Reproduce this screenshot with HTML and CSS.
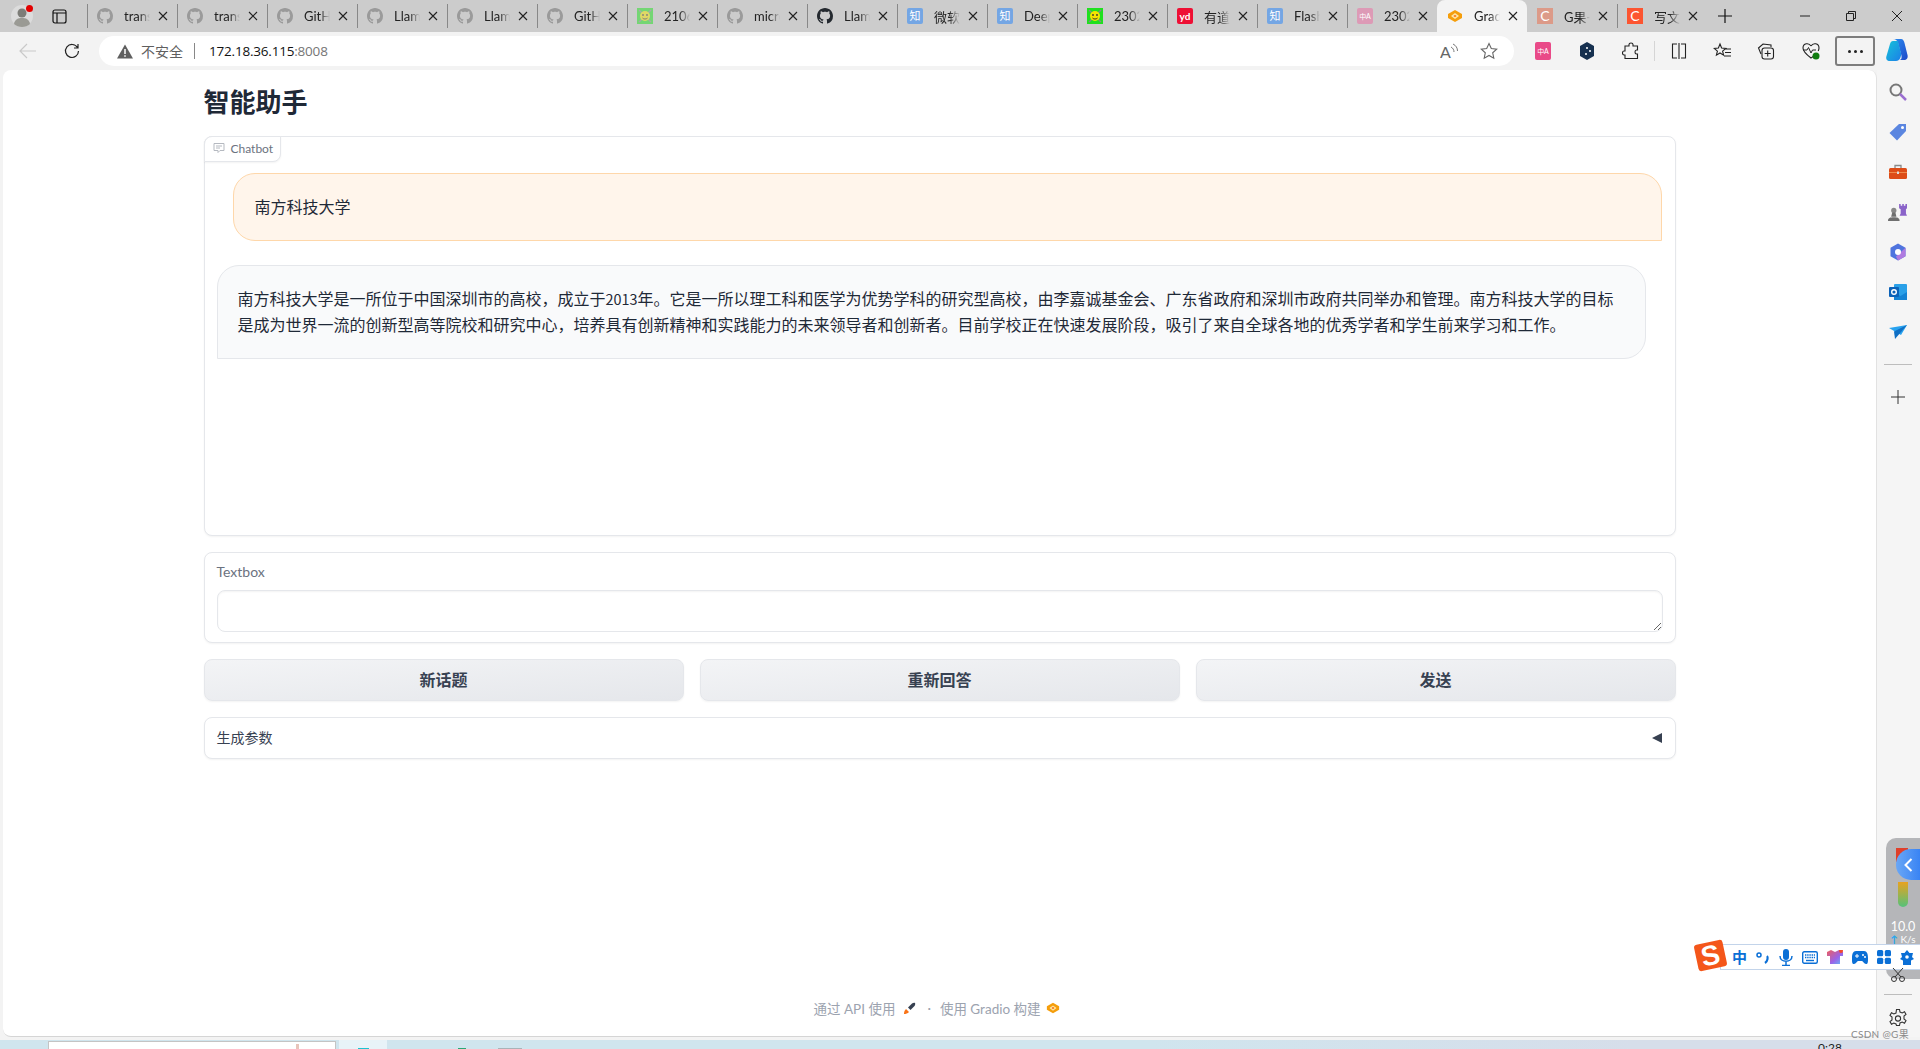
FILE: index.html
```html
<!DOCTYPE html>
<html lang="zh-CN">
  <head>
    <meta charset="UTF-8" />
    <meta name="viewport" content="width=device-width, initial-scale=1.0" />
    <title>智能助手</title>
    <link rel="stylesheet" href="styles.css">
  </head>
  <body>
    <svg class="defs" width="0" height="0">
      <symbol id="gh" viewBox="0 0 16 16">
        <path d="M8 0C3.58 0 0 3.58 0 8c0 3.54 2.29 6.53 5.47 7.59.4.07.55-.17.55-.38 0-.19-.01-.82-.01-1.49-2.01.37-2.53-.49-2.69-.94-.09-.23-.48-.94-.82-1.13-.28-.15-.68-.52-.01-.53.63-.01 1.08.58 1.23.82.72 1.21 1.87.87 2.33.66.07-.52.28-.87.51-1.07-1.78-.2-3.64-.89-3.64-3.95 0-.87.31-1.59.82-2.15-.08-.2-.36-1.02.08-2.12 0 0 .67-.21 2.2.82.64-.18 1.32-.27 2-.27.68 0 1.36.09 2 .27 1.53-1.04 2.2-.82 2.2-.82.44 1.1.16 1.92.08 2.12.51.56.82 1.27.82 2.15 0 3.07-1.87 3.75-3.65 3.95.29.25.54.73.54 1.48 0 1.07-.01 1.93-.01 2.2 0 .21.15.46.55.38A8.013 8.013 0 0016 8c0-4.42-3.58-8-8-8z" fill="currentColor" />
      </symbol>
      <symbol id="close" viewBox="0 0 10 10">
        <path d="M1 1l8 8M9 1l-8 8" stroke="#222" stroke-width="1.1" fill="none" />
      </symbol>
      <symbol id="smile" viewBox="0 0 16 16">
        <rect width="16" height="16" fill="#1fe01f" />
        <path d="M2 2l12 12M14 2L2 14" stroke="#888" stroke-width="1.4" />
        <circle cx="8" cy="8" r="5" fill="#f5e400" />
        <circle cx="6" cy="7" r=".9" fill="#333" />
        <circle cx="10" cy="7" r=".9" fill="#333" />
        <path d="M5.5 10c1.5 1.4 3.5 1.4 5 0" stroke="#333" fill="none" />
      </symbol>
      <symbol id="gradio" viewBox="0 0 16 16">
        <path d="M8 2l7 4v4l-7 4-7-4V6z" fill="#f59e0b" />
        <path d="M8 5l4 3-4 3-4-3z" fill="#fde9a8" />
        <path d="M8 6.700l1.700 1.300L8 9.300 6.300 8z" fill="#f97316" />
      </symbol>
    </svg>

    <div class="tabbar">
      <div class="profile">
        <svg width="24" height="24" viewBox="0 0 24 24">
          <circle cx="12" cy="12" r="11" fill="#dcdcdc" />
          <circle cx="12" cy="9" r="4.500" fill="#7d7d78" />
          <path d="M4 20c1-5 4-6 8-6s7 1 8 6c-4 4-12 4-16 0z" fill="#9a9a94" />
        </svg>
        <span class="profile-dot"></span>
      </div>
      <div class="tablist-btn">
        <svg width="15" height="15" viewBox="0 0 15 15">
          <rect x="1" y="1" width="13" height="13" rx="2" fill="none" stroke="#111" stroke-width="1.2" />
          <path d="M1 4h13M5 4v10" stroke="#111" stroke-width="1.2" />
        </svg>
      </div>
      <div class="tabs">
        <div class="tab"><svg class="fav faded"><use href="#gh" /></svg><span class="tab-title">trans</span><svg class="tab-x"><use href="#close" /></svg></div>
        <div class="tab"><svg class="fav faded"><use href="#gh" /></svg><span class="tab-title">trans</span><svg class="tab-x"><use href="#close" /></svg></div>
        <div class="tab"><svg class="fav faded"><use href="#gh" /></svg><span class="tab-title">GitHub</span><svg class="tab-x"><use href="#close" /></svg></div>
        <div class="tab"><svg class="fav faded"><use href="#gh" /></svg><span class="tab-title">Llama</span><svg class="tab-x"><use href="#close" /></svg></div>
        <div class="tab"><svg class="fav faded"><use href="#gh" /></svg><span class="tab-title">Llama</span><svg class="tab-x"><use href="#close" /></svg></div>
        <div class="tab"><svg class="fav faded"><use href="#gh" /></svg><span class="tab-title">GitHub</span><svg class="tab-x"><use href="#close" /></svg></div>
        <div class="tab"><svg class="fav dim"><use href="#smile" /></svg><span class="tab-title">2106</span><svg class="tab-x"><use href="#close" /></svg></div>
        <div class="tab"><svg class="fav faded"><use href="#gh" /></svg><span class="tab-title">micro</span><svg class="tab-x"><use href="#close" /></svg></div>
        <div class="tab"><svg class="fav dark"><use href="#gh" /></svg><span class="tab-title">Llama</span><svg class="tab-x"><use href="#close" /></svg></div>
        <div class="tab"><span class="fav badge zhi">知</span><span class="tab-title">微软亚</span><svg class="tab-x"><use href="#close" /></svg></div>
        <div class="tab"><span class="fav badge zhi">知</span><span class="tab-title">Deep</span><svg class="tab-x"><use href="#close" /></svg></div>
        <div class="tab"><svg class="fav"><use href="#smile" /></svg><span class="tab-title">2302</span><svg class="tab-x"><use href="#close" /></svg></div>
        <div class="tab"><span class="fav badge yd">yd</span><span class="tab-title">有道翻</span><svg class="tab-x"><use href="#close" /></svg></div>
        <div class="tab"><span class="fav badge zhi">知</span><span class="tab-title">Flash</span><svg class="tab-x"><use href="#close" /></svg></div>
        <div class="tab"><span class="fav badge trans">中A</span><span class="tab-title">2302</span><svg class="tab-x"><use href="#close" /></svg></div>
        <div class="tab tab-active"><svg class="fav"><use href="#gradio" /></svg><span class="tab-title">Gradio</span><svg class="tab-x"><use href="#close" /></svg></div>
        <div class="tab tab-after"><span class="fav badge csdn faded-badge">C</span><span class="tab-title">G果-</span><svg class="tab-x"><use href="#close" /></svg></div>
        <div class="tab"><span class="fav badge csdn">C</span><span class="tab-title">写文章</span><svg class="tab-x"><use href="#close" /></svg></div>
        <div class="tab-end"></div>
      </div>
      <div class="newtab">
        <svg width="14" height="14" viewBox="0 0 14 14"><path d="M7 0v14M0 7h14" stroke="#111" stroke-width="1.200" /></svg>
      </div>
      <div class="winbtns">
        <svg class="win-min" width="10" height="10" viewBox="0 0 10 10"><path d="M0 5h10" stroke="#222" /></svg>
        <svg class="win-max" width="10" height="10" viewBox="0 0 10 10"><path d="M.5 2.500h7v7h-7zM2.500 2.500v-2h7v7h-2" fill="none" stroke="#222" /></svg>
        <svg class="win-close" width="10" height="10" viewBox="0 0 10 10"><path d="M0 0l10 10M10 0L0 10" stroke="#222" /></svg>
      </div>
    </div>

    <div class="toolbar">
      <svg class="nav-back" width="18" height="16" viewBox="0 0 18 16"><path d="M17 8H1M8 1L1 8l7 7" fill="none" stroke="#c9c9c9" stroke-width="1.200" /></svg>
      <svg class="nav-reload" width="16" height="16" viewBox="0 0 16 16"><path d="M13.500 4.500A6.500 6.500 0 1 0 14.500 8M14 1v4h-4" fill="none" stroke="#222" stroke-width="1.200" /></svg>
      <div class="addressbar">
        <svg class="warn" width="16" height="15" viewBox="0 0 16 15"><path d="M8 .5l8 14H0z" fill="#5f5f5f" /><path d="M8 5v5M8 11.200v1.600" stroke="#fff" stroke-width="1.500" /></svg>
        <span class="insecure">不安全</span>
        <span class="addr-sep"></span>
        <span class="url">172.18.36.115<span class="url-port">:8008</span></span>
        <svg class="addr-read" width="18" height="18" viewBox="0 0 18 18"><text x="0" y="16" class="read-a">A</text><path d="M11 5c2 1 3 3 3 5M13 2c3 1.500 4.500 4 4.500 7" fill="none" stroke="#777" /></svg>
        <svg class="addr-star" width="18" height="18" viewBox="0 0 18 18"><path d="M9 1.500l2.300 5 5.400.6-4 3.700 1.100 5.400L9 13.500l-4.800 2.700 1.100-5.400-4-3.700 5.400-.6z" fill="none" stroke="#666" stroke-width="1.100" /></svg>
      </div>
      <div class="ext-icons">
        <span class="ext ext-trans">中A</span>
        <svg class="ext" width="18" height="20" viewBox="0 0 18 20"><path d="M9 1l7 4v10l-7 4-7-4V5z" fill="#16304f" /><circle cx="9" cy="7" r="1" fill="#fff" /><circle cx="12" cy="10" r="1" fill="#fff" /><circle cx="8" cy="13" r="1" fill="#fff" /></svg>
        <svg class="ext" width="18" height="18" viewBox="0 0 18 18"><path d="M7 2.500c0-2 4-2 4 0V4h4.500v4h-1c-2 0-2 4 0 4h1v4.500H3V13H2c-2 0-2-4 0-4h1V4h4z" fill="none" stroke="#222" stroke-width="1.100" /></svg>
        <span class="ext-sep"></span>
        <svg class="ext" width="16" height="16" viewBox="0 0 16 16"><path d="M6 1H1.500v14H6M10 1h4.500v14H10M8 0v16" fill="none" stroke="#222" stroke-width="1.100" /></svg>
        <svg class="ext" width="18" height="18" viewBox="0 0 18 18"><path d="M7 2l1.600 4 4.200.4-3.200 2.700 1 4.100L7 11l-3.600 2.200 1-4.100L1.200 6.400 5.400 6zM12 7h6M12 10.500h6M11 14h7" fill="none" stroke="#222" stroke-width="1.100" /></svg>
        <svg class="ext" width="18" height="18" viewBox="0 0 18 18"><path d="M4 12L1.500 6 6 2l8 1v2" fill="none" stroke="#222" stroke-width="1.100" /><rect x="5" y="6" width="11.500" height="11" rx="2.500" fill="none" stroke="#222" stroke-width="1.100" /><path d="M10.700 8.500v6M7.700 11.500h6" stroke="#222" stroke-width="1.100" /></svg>
        <svg class="ext" width="20" height="20" viewBox="0 0 20 20"><path d="M10 5C8 1.500 2 2 2 7c0 3.500 4 7 8 10 1-.7 1.500-1 2-1.500M10 5c2-3.500 8-3 8 2 0 1-.3 2-.8 3" fill="none" stroke="#222" stroke-width="1.100" /><path d="M2 9h4l1.500-2.500L10 12l1.500-3H15" fill="none" stroke="#222" /><circle cx="15" cy="15" r="3.500" fill="#107c10" /></svg>
        <div class="more"><span></span><span></span><span></span></div>
      </div>
      <svg class="copilot" width="24" height="26" viewBox="0 0 24 26">
        <defs>
          <linearGradient id="cop1" x1="0" y1="0" x2="1" y2="1"><stop offset="0" stop-color="#17c3d8" /><stop offset="1" stop-color="#1b7fe8" /></linearGradient>
          <linearGradient id="cop2" x1="0" y1="0" x2="1" y2="1"><stop offset="0" stop-color="#2b8cf0" /><stop offset="1" stop-color="#1d48c8" /></linearGradient>
        </defs>
        <path d="M8 1h8c2 0 3 2 3.500 4l3 12c.8 3-1 5-3.500 5h-5c3 0 3-3 2-6L13 5c-.5-2-2-4-5-4z" fill="url(#cop2)" />
        <path d="M8 3h5l3 12c.6 3-1 8-5 8H5c-3 0-4.500-2-3.500-5L5 6c.5-2 1.500-3 3-3z" fill="url(#cop1)" />
      </svg>
    </div>

    <div class="window">
      <main class="page">
        <div class="container">
          <h1 class="app-title">智能助手</h1>

          <section class="block chatbot">
            <div class="block-label">
              <svg width="12" height="12" viewBox="0 0 12 12"><path d="M1 1.500h10v7H7l-2 2v-2H1z" fill="none" stroke="#b5b9c0" /><path d="M3 4h6M3 6h4" stroke="#b5b9c0" /></svg>
              Chatbot
            </div>
            <div class="messages">
              <div class="msg msg-user">南方科技大学</div>
              <div class="msg msg-bot">南方科技大学是一所位于中国深圳市的高校，成立于<span class="digits">2013</span>年。它是一所以理工科和医学为优势学科的研究型高校，由李嘉诚基金会、广东省政府和深圳市政府共同举办和管理。南方科技大学的目标是成为世界一流的创新型高等院校和研究中心，培养具有创新精神和实践能力的未来领导者和创新者。目前学校正在快速发展阶段，吸引了来自全球各地的优秀学者和学生前来学习和工作。</div>
            </div>
          </section>

          <section class="block textbox">
            <label class="field-label" for="msgInput">Textbox</label>
            <textarea id="msgInput" class="field-input" rows="1"></textarea>
          </section>

          <div class="btn-row">
            <button class="btn">新话题</button>
            <button class="btn">重新回答</button>
            <button class="btn">发送</button>
          </div>

          <section class="block accordion">
            <span>生成参数</span>
            <span class="caret"></span>
          </section>
        </div>

        <footer class="foot">
          <span>通过 API 使用</span>
          <svg class="foot-rocket" width="13" height="13" viewBox="0 0 13 13"><path d="M1 12c0-2 .5-3.500 2-5l3 3c-1.500 1.500-3 2-5 2z" fill="#f97316" /><path d="M5 5.500L9 1.500c1-.8 2.500-.8 3-.5.300.5.300 2-.5 3L7.500 8z" fill="#374151" /></svg>
          <span class="foot-dot">·</span>
          <span>使用 Gradio 构建</span>
          <svg class="foot-logo"><use href="#gradio" /></svg>
        </footer>
      </main>

      <aside class="sidebar">
        <div class="side-item">
          <svg width="20" height="20" viewBox="0 0 20 20"><circle cx="8" cy="8" r="5.500" fill="none" stroke="#777" stroke-width="2" /><path d="M12 12l6 6" stroke="#9b6fd0" stroke-width="2.500" /></svg>
        </div>
        <div class="side-item">
          <svg width="18" height="18" viewBox="0 0 18 18"><path d="M10 1h7v7l-9 9.500L.500 10z" fill="#5b86e0" /><circle cx="13.500" cy="4.500" r="1.500" fill="#fff" /></svg>
        </div>
        <div class="side-item">
          <svg width="18" height="16" viewBox="0 0 18 16"><path d="M6 4V1.500h6V4" fill="none" stroke="#8a8a8a" stroke-width="1.300" /><rect y="4" width="18" height="11" rx="1.500" fill="#dd4c17" /><path d="M0 8.500h18" stroke="#f08a4b" /><rect x="8" y="7.500" width="2" height="2.500" fill="#ddd" /></svg>
        </div>
        <div class="side-item">
          <svg width="19" height="19" viewBox="0 0 18 18"><path d="M10.500 1h1.500v1.500h1.500V1h1.500v1.500h1.500V1H18v4l-1 1v4l1 2h-7l1-2V6l-1.500-1z" fill="#8a63c9" /><circle cx="5.500" cy="7" r="2.500" fill="#888" /><path d="M4 9h3l1 4H3zM0 17c0-3 2-3.500 5.500-3.500S11 14 11 17z" fill="#6f6f6f" /></svg>
        </div>
        <div class="side-item">
          <svg width="18" height="18" viewBox="0 0 18 18"><path d="M9 .500l7.500 4.300v8.400L9 17.500l-7.500-4.300V4.800z" fill="#4f74de" /><path d="M16.500 4.800v8.400L9 17.500l-2-4z" fill="#b07be0" /><circle cx="9" cy="9" r="3" fill="#fff" /></svg>
        </div>
        <div class="side-item">
          <svg width="18" height="18" viewBox="0 0 18 18"><rect x="5" y="1" width="13" height="16" rx="1" fill="#2aa0e8" /><path d="M5 9l6.500 4L18 9v8H5z" fill="#1483d4" /><rect y="4" width="10" height="10" rx="1" fill="#0b62b8" /><circle cx="5" cy="9" r="2.300" fill="none" stroke="#fff" stroke-width="1.400" /></svg>
        </div>
        <div class="side-item">
          <svg width="18" height="16" viewBox="0 0 18 16"><path d="M0 4l18-3-6 10z" fill="#27a2ef" /><path d="M18 1L5 7.500 6 15l3-3.500z" fill="#0f6fc4" /></svg>
        </div>
        <div class="side-sep"></div>
        <div class="side-item">
          <svg width="14" height="14" viewBox="0 0 14 14"><path d="M7 0v14M0 7h14" stroke="#333" /></svg>
        </div>
        <div class="side-bottom">
          <div class="side-sep side-sep-low"></div>
          <svg width="20" height="20" viewBox="0 0 20 20"><path d="M8.500 1.500h3l.5 2.500 2.200 1 2.300-1.200 1.500 2.600-2 1.700v2.800l2 1.700-1.500 2.600-2.300-1.200-2.200 1-.5 2.500h-3L8 16l-2.200-1-2.300 1.200L2 13.600l2-1.700V9.100L2 7.400l1.500-2.600L5.800 6 8 5z" fill="none" stroke="#333" stroke-width="1.100" /><circle cx="10" cy="10.500" r="2.600" fill="none" stroke="#333" stroke-width="1.100" /></svg>
        </div>
      </aside>
    </div>

    <div class="taskbar">
      <div class="task-window"><span class="task-peak"></span></div>
      <div class="task-light"><span class="task-cyan"></span></div>
      <span class="task-green"></span>
      <span class="task-gray"></span>
      <span class="task-clock">0:28</span>
    </div>

    <!-- floating widgets that sit over the page -->
    <div class="speed-panel">
      <div class="speed-red"></div>
      <div class="speed-toggle">
        <svg width="9" height="14" viewBox="0 0 9 14"><path d="M7.500 1L1.500 7l6 6" fill="none" stroke="#fff" stroke-width="2" /></svg>
      </div>
      <div class="speed-bar"></div>
      <div class="speed-num">10.0</div>
      <div class="speed-unit"><b>↑</b> K/s</div>
    </div>

    <div class="ime">
      <span class="ime-logo">S</span>
      <span class="ime-item ime-zh">中</span>
      <svg class="ime-item" width="14" height="14" viewBox="0 0 14 14"><circle cx="3" cy="5" r="2" fill="none" stroke="#0a6fd6" stroke-width="1.500" /><path d="M11 6c1 1 1 5-2 7" fill="none" stroke="#0a6fd6" stroke-width="2.200" /></svg>
      <svg class="ime-item" width="14" height="17" viewBox="0 0 14 17"><rect x="4" width="6" height="11" rx="3" fill="#0a6fd6" /><path d="M1 7c0 7 12 7 12 0M7 12v4M3 16.500h8" fill="none" stroke="#0a6fd6" stroke-width="1.500" /></svg>
      <svg class="ime-item" width="16" height="13" viewBox="0 0 16 13"><rect x=".7" y=".7" width="14.600" height="11.600" rx="1.500" fill="none" stroke="#0a6fd6" stroke-width="1.400" /><path d="M3 4h10M3 6.500h10" stroke="#0a6fd6" stroke-width="1.400" stroke-dasharray="1.400 .8" /><path d="M4 9.500h8" stroke="#0a6fd6" stroke-width="1.400" /></svg>
      <svg class="ime-item" width="16" height="14" viewBox="0 0 16 14"><defs><linearGradient id="shirt" x1="0" y1="0" x2="1" y2="1"><stop offset="0" stop-color="#ef5d5d" /><stop offset=".6" stop-color="#9a63e8" /><stop offset="1" stop-color="#5cc2f5" /></linearGradient></defs><path d="M0 2l4-2 4 2 4-2 4 2v4h-3v8H3V6H0z" fill="url(#shirt)" /><circle cx="14" cy="1" r="2" fill="#f4492d" /></svg>
      <svg class="ime-item" width="16" height="13" viewBox="0 0 16 13"><path d="M4 0h8c3 0 4 3 4 7s0 6-2 6-3-3-4-3H6c-1 0-2 3-4 3s-2-2-2-6 1-7 4-7z" fill="#0a6fd6" /><path d="M3 5h4M5 3v4" stroke="#fff" /><circle cx="11" cy="4" r="1" fill="#fff" /><circle cx="13" cy="6" r="1" fill="#fff" /></svg>
      <svg class="ime-item" width="14" height="14" viewBox="0 0 14 14"><rect width="6.200" height="6.200" rx="1.500" fill="#0a6fd6" /><rect x="7.800" width="6.200" height="6.200" rx="1.500" fill="#0a6fd6" /><rect y="7.800" width="6.200" height="6.200" rx="1.500" fill="#0a6fd6" /><rect x="7.800" y="7.800" width="6.200" height="6.200" rx="1.500" fill="#0a6fd6" /></svg>
      <svg class="ime-item" width="14" height="15" viewBox="0 0 14 15"><path d="M7 0l2.500 3H13l-1 4 2 2-3 1.500V15H3v-4.500L0 9l2-2-1-4h3.500z" fill="#0a6fd6" /><circle cx="7" cy="7" r="1.800" fill="#fff" /></svg>
    </div>
    <svg class="scissors" width="16" height="14" viewBox="0 0 16 14"><path d="M3 0l8 9M13 0L5 9" stroke="#333" /><circle cx="4" cy="11" r="2.500" fill="none" stroke="#333" /><circle cx="12" cy="11" r="2.500" fill="none" stroke="#333" /></svg>
    <div class="watermark">CSDN @G果</div>
  </body>
</html>
```

FILE: styles.css
```css
* {
  box-sizing: border-box;
}

html,
body {
  margin: 0;
  height: 1049px;
  overflow: hidden;
}

body {
  position: relative;
  background: #f3f3f3;
  font-family: Lato, "Noto Sans CJK SC", sans-serif;
  color: #1f2937;
}

.defs {
  position: absolute;
}

/* browser tab strip */
.tabbar {
  display: flex;
  align-items: center;
  height: 32px;
  background: #cccccc;
}

.profile {
  position: relative;
  width: 44px;
  padding-left: 10px;
  height: 24px;
}

.profile-dot {
  position: absolute;
  left: 26px;
  top: 1px;
  width: 7px;
  height: 7px;
  border-radius: 50%;
  background: #e30000;
}

.tablist-btn {
  display: flex;
  justify-content: flex-start;
  padding-left: 8px;
  width: 43px;
}

.tabs {
  display: flex;
  height: 32px;
  width: 1619px;
}

.tab {
  display: flex;
  align-items: center;
  width: 90px;
  height: 32px;
  padding-left: 10px;
  flex: none;
  background: linear-gradient(#888, #888) left center / 1px 24px no-repeat;
}

.tab-end {
  width: 1px;
  height: 24px;
  margin-top: 4px;
  background: #888;
}

.tab-active {
  background: #f3f3f3;
  border-radius: 8px 8px 0 0;
}

.tab-after {
  background: none;
}

.fav {
  width: 16px;
  height: 16px;
  flex: none;
  margin-right: 11px;
}

.faded {
  color: #9a9a9a;
}

.dark {
  color: #24292f;
}

.dim {
  opacity: 0.5;
}

.badge {
  display: flex;
  align-items: center;
  justify-content: center;
  border-radius: 2px;
  color: #fff;
  font-size: 11px;
  line-height: 16px;
}

.zhi {
  background: #74a6e4;
}

.yd {
  background: #ee0f34;
  font-weight: 700;
  font-size: 10px;
}

.trans {
  background: #dd9ab6;
  font-size: 7px;
}

.csdn {
  background: #fc5531;
  border-radius: 0;
  font-size: 14px;
}

.faded-badge {
  background: #dc9a88;
}

.tab-title {
  width: 26px;
  margin-right: 8px;
  overflow: hidden;
  white-space: nowrap;
  font-size: 13px;
  color: #222;
  -webkit-mask-image: linear-gradient(90deg, #000 60%, transparent);
  mask-image: linear-gradient(90deg, #000 60%, transparent);
}

.tab-x {
  width: 10px;
  height: 10px;
  flex: none;
}

.newtab {
  display: flex;
  justify-content: center;
  width: 38px;
}

.winbtns {
  display: flex;
  align-items: center;
  margin-left: 56px;
}

.win-min {
  margin-right: 36px;
}

.win-max {
  margin-right: 36px;
}

/* address bar row */
.toolbar {
  display: flex;
  align-items: center;
  height: 38px;
  background: #f3f3f3;
}

.nav-back {
  margin-left: 19px;
}

.nav-reload {
  margin-left: 27px;
}

.addressbar {
  display: flex;
  align-items: center;
  width: 1415px;
  height: 30px;
  margin-left: 19px;
  border-radius: 15px;
  background: #fff;
  font-size: 14px;
}

.warn {
  margin-left: 18px;
}

.insecure {
  margin-left: 8px;
  color: #5f5f5f;
  font-size: 14px;
}

.addr-sep {
  width: 1px;
  height: 16px;
  margin: 0 14px 0 11px;
  background: #888;
}

.url {
  color: #111;
  font-family: "Open Sans", sans-serif;
  font-size: 13.5px;
  letter-spacing: -0.2px;
}

.url-port {
  color: #767676;
}

.addr-read {
  margin-left: auto;
}

.read-a {
  font-size: 16px;
  fill: #666;
}

.addr-star {
  margin: 0 16px 0 22px;
}

.ext-icons {
  display: flex;
  align-items: center;
  margin-left: 21px;
}

.ext {
  margin-right: 26px;
  flex: none;
}

.ext-trans {
  display: flex;
  align-items: center;
  justify-content: center;
  width: 16px;
  height: 18px;
  border-radius: 2px;
  margin-right: 27px;
  background: #e94a88;
  color: #fff;
  font-size: 7px;
}

.ext-sep {
  width: 1px;
  height: 20px;
  margin: 0 16px 0 -12px;
  background: #d5d5d5;
}

.more {
  display: flex;
  align-items: center;
  justify-content: center;
  gap: 3px;
  width: 40px;
  height: 30px;
  margin-left: -12px;
  border: 2px solid #7d7d7d;
  border-radius: 3px;
}

.more span {
  width: 3px;
  height: 3px;
  border-radius: 50%;
  background: #222;
}

.copilot {
  margin-left: 10px;
}

/* page area */
.window {
  display: flex;
  height: 967px;
  padding-left: 3px;
}

.page {
  display: flex;
  flex-direction: column;
  flex: 1;
  background: #fff;
  border-radius: 8px;
  border-right: 1px solid #e2e2e2;
  border-bottom: 1px solid #d5d5d5;
}

.container {
  display: flex;
  flex-direction: column;
  gap: 16px;
  width: 1472px;
  margin: 0 auto;
}

.app-title {
  margin: 15px 0 0;
  height: 35px;
  font-size: 26px;
  line-height: 35px;
  font-weight: 700;
  color: #1f2937;
}

.block {
  position: relative;
  background: #fff;
  border: 1px solid #e5e7eb;
  border-radius: 8px;
  box-shadow: 0 1px 2px rgba(0, 0, 0, 0.05);
}

.chatbot {
  height: 400px;
}

.block-label {
  position: absolute;
  left: -1px;
  top: -1px;
  display: flex;
  align-items: center;
  gap: 6px;
  height: 26px;
  padding: 0 7px 2px 8px;
  background: #fff;
  border: 1px solid #e5e7eb;
  border-radius: 8px 0 8px 0;
  box-shadow: 0 1px 2px rgba(0, 0, 0, 0.05);
  font-size: 12px;
  color: #6b7280;
}

.messages {
  display: flex;
  flex-direction: column;
  gap: 24px;
  padding: 36px 13px 0 12px;
}

.msg {
  padding: 21px;
  font-size: 16px;
  line-height: 26px;
  color: #1f2937;
  border: 1px solid;
  border-radius: 22px;
}

.msg-user {
  height: 68px;
  margin-left: 16px;
  padding-top: 20px;
  background: #fff5eb;
  border-color: #fed7aa;
  border-bottom-right-radius: 0;
}

.msg-bot {
  margin-right: 16px;
  height: 94px;
  padding-top: 20px;
  padding-left: 20px;
  background: #f9fafb;
  border-color: #e5e7eb;
  border-bottom-left-radius: 0;
}

/* the digits sit narrower in the original font */
.digits {
  font-family: "Noto Sans CJK SC", sans-serif;
  font-size: 14.4px;
}

.textbox {
  height: 91px;
  padding: 11px 12px 0;
}

.field-label {
  display: block;
  height: 26px;
  font-size: 14px;
  line-height: 16px;
  color: #6b7280;
}

.field-input {
  display: block;
  width: 100%;
  height: 42px;
  border: 1px solid #e5e7eb;
  border-radius: 8px;
  background: #fff;
  box-shadow: inset 0 1px 2px rgba(0, 0, 0, 0.05);
  outline: none;
}

.btn-row {
  display: grid;
  grid-template-columns: repeat(3, 1fr);
  gap: 16px;
}

.btn {
  height: 42px;
  padding-bottom: 4px;
  border: 1px solid #e5e7eb;
  border-radius: 8px;
  background: linear-gradient(to bottom right, #f3f4f6, #e5e7eb);
  box-shadow: 0 1px 2px rgba(0, 0, 0, 0.05);
  font-family: inherit;
  font-size: 16px;
  font-weight: 600;
  color: #374151;
}

.accordion {
  display: flex;
  align-items: center;
  justify-content: space-between;
  height: 42px;
  padding: 0 13px 3px 12px;
  font-size: 14px;
  color: #374151;
}

.caret {
  width: 0;
  height: 0;
  margin-top: 2px;
  border-top: 5px solid transparent;
  border-bottom: 5px solid transparent;
  border-right: 10px solid #374151;
}

.foot {
  display: flex;
  align-items: center;
  justify-content: center;
  height: 20px;
  margin-top: auto;
  margin-bottom: 18px;
  padding-right: 6px;
  font-size: 13.5px;
  color: #9ca3af;
}

.foot-rocket {
  margin-left: 8px;
}

.foot-dot {
  margin: 0 9px 0 11px;
}

.foot-logo {
  width: 14px;
  height: 14px;
  margin-left: 5px;
}

.sidebar {
  position: relative;
  display: flex;
  flex-direction: column;
  align-items: center;
  width: 43px;
  flex: none;
  padding: 2px 2px 0 0;
  background: #f5f5f5;
}

.side-item {
  display: flex;
  align-items: center;
  justify-content: center;
  width: 100%;
  height: 40px;
  flex: none;
}

.side-sep {
  width: 28px;
  height: 1px;
  margin: 12px 0 12px;
  background: #bdbdbd;
}

.side-bottom {
  display: flex;
  flex-direction: column;
  align-items: center;
  margin-top: auto;
  padding-bottom: 9px;
}

.side-sep-low {
  margin: 0 0 13px;
}

.taskbar {
  display: flex;
  align-items: flex-start;
  height: 9px;
  margin-top: 3px;
  overflow: hidden;
  background: linear-gradient(90deg, #d0e5ee 60%, #d6deea 85%);
}

.task-window {
  position: relative;
  width: 288px;
  height: 20px;
  margin: 1px 0 0 48px;
  background: #fff;
  border: 1px solid #c4c4c4;
}

.task-peak {
  position: absolute;
  left: 247px;
  top: 2px;
  width: 3px;
  height: 6px;
  background: #e8c4ba;
}

.task-light {
  display: flex;
  align-items: flex-end;
  justify-content: center;
  width: 48px;
  height: 9px;
  margin-left: 3px;
  background: #e8f3f8;
}

.task-cyan {
  width: 11px;
  height: 1px;
  background: #1cc3d0;
}

.task-green {
  align-self: flex-end;
  width: 8px;
  height: 1px;
  margin-left: 71px;
  background: #2aa876;
}

.task-gray {
  align-self: flex-end;
  width: 24px;
  height: 1px;
  margin-left: 32px;
  background: #a9b3b8;
}

.task-clock {
  margin: 1px 0 0 1296px;
  font-size: 12px;
  line-height: 14px;
  color: #222;
}

/* over the page */
.speed-panel {
  position: absolute;
  left: 1886px;
  top: 838px;
  width: 34px;
  height: 141px;
  background: #b5b6b9;
  border-radius: 10px 0 0 10px;
  color: #fff;
  text-align: center;
  overflow: hidden;
}

.speed-red {
  position: absolute;
  left: 10px;
  top: 10px;
  width: 12px;
  height: 14px;
  background: #e0402a;
}

.speed-toggle {
  position: absolute;
  left: 10px;
  top: 11px;
  display: flex;
  align-items: center;
  justify-content: center;
  width: 30px;
  height: 31px;
  padding-right: 6px;
  border-radius: 15px 0 0 15px;
  background: linear-gradient(90deg, #6aa7f5, #2d7bf4);
}

.speed-bar {
  position: absolute;
  left: 12px;
  top: 44px;
  width: 10px;
  height: 25px;
  border-radius: 0 0 5px 5px;
  background: linear-gradient(#e8a21f, #55c27a);
}

.speed-num {
  position: absolute;
  left: 0;
  top: 81px;
  width: 100%;
  font-size: 12.5px;
  line-height: 15px;
}

.speed-unit {
  position: absolute;
  left: 0;
  top: 96px;
  width: 100%;
  font-size: 10px;
  line-height: 10px;
}

.speed-unit b {
  color: #22a7f0;
}

.ime {
  position: absolute;
  left: 1720px;
  top: 944px;
  display: flex;
  align-items: center;
  width: 200px;
  height: 26px;
  padding-left: 11px;
  background: #fff;
  border: 1px solid #c3d4ea;
  border-right: 0;
  gap: 9px;
}

.ime-logo {
  position: absolute;
  left: -25px;
  top: -3px;
  width: 29px;
  height: 27px;
  background: #f4561a;
  border-radius: 3px;
  color: #fff;
  font-family: "Liberation Sans", sans-serif;
  font-size: 28px;
  font-weight: 700;
  line-height: 27px;
  text-align: center;
  transform: rotate(-12deg);
}

.ime-item {
  flex: none;
}

.ime-zh {
  font-size: 15px;
  line-height: 20px;
  font-weight: 700;
  color: #0a6fd6;
}

.scissors {
  position: absolute;
  left: 1890px;
  top: 968px;
}

.watermark {
  position: absolute;
  left: 1851px;
  top: 1027px;
  font-size: 10px;
  line-height: 14px;
  color: #8a8a8a;
  letter-spacing: 0.3px;
}
```
